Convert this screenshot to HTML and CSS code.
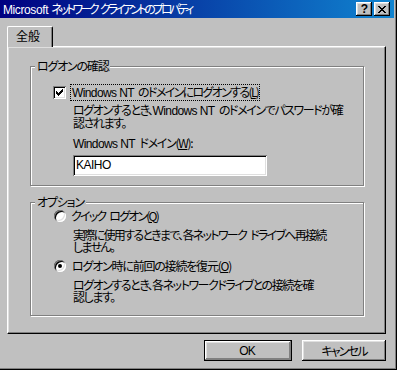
FILE: index.html
```html
<!DOCTYPE html>
<html lang="ja">
<head>
<meta charset="utf-8">
<link rel="stylesheet" href="styles.css">
</head>
<body>
<div class="window">
  <div class="titlebar">
    <span class="title"><span class="en">Microsoft</span> ネットワーク クライアントのプロパティ</span>
    <div class="tbtns">
      <span class="tbtn help">?</span>
      <span class="tbtn close"><svg width="8" height="7" viewBox="0 0 8 7" shape-rendering="crispEdges"><path d="M0 0h2v1H0z M6 0h2v1H6z M1 1h2v1H1z M5 1h2v1H5z M2 2h4v1H2z M3 3h2v1H3z M2 4h4v1H2z M1 5h2v1H1z M5 5h2v1H5z M0 6h2v1H0z M6 6h2v1H6z"/></svg></span>
    </div>
  </div>
  <div class="tabs"><div class="tab">全般</div></div>
  <div class="panel">
    <div class="group g1">
      <div class="legend">ログオンの確認</div>
      <div class="row check-row">
        <span class="checkbox"><svg width="7" height="7" viewBox="0 0 7 7" shape-rendering="crispEdges"><path d="M6 0h1v1H6z M5 1h2v1H5z M0 2h1v1H0z M4 2h3v1H4z M0 3h2v1H0z M3 3h3v1H3z M0 4h5v1H0z M1 5h3v1H1z M2 6h1v1H2z"/></svg></span>
        <span class="label focus"><span class="en">Windows NT</span> のドメインにログオンする(<u>L</u>)</span>
      </div>
      <p class="desc d1">ログオンするとき、<span class="en">Windows NT</span> のドメインでパスワードが確<br>認されます。</p>
      <div class="field-label"><span class="en">Windows NT</span> ドメイン(<u>W</u>):</div>
      <div class="input">KAIHO</div>
    </div>
    <div class="group g2">
      <div class="legend">オプション</div>
      <div class="row radio-row r1">
        <span class="radio"></span>
        <span class="label">クイック ログオン(<u>Q</u>)</span>
      </div>
      <p class="desc d2">実際に使用するときまで、各ネットワーク ドライブへ再接続<br>しません。</p>
      <div class="row radio-row r2">
        <span class="radio checked"><span class="dot"></span></span>
        <span class="label">ログオン時に前回の接続を復元(<u>O</u>)</span>
      </div>
      <p class="desc d3">ログオンするとき、各ネットワークドライブとの接続を確<br>認します。</p>
    </div>
  </div>
  <div class="buttons">
    <div class="btn default"><span class="btn-inner ok">OK</span></div>
    <div class="btn cancel"><span class="btn-inner">キャンセル</span></div>
  </div>
</div>
</body>
</html>
```

FILE: styles.css
```css
html, body {
  margin: 0;
  padding: 0;
  background: #c0c0c0;
}
body {
  font-family: "Noto Sans CJK JP", "Noto Sans", sans-serif;
  font-size: 12px;
  line-height: 12px;
  color: #000;
  font-feature-settings: "palt";
  letter-spacing: -1.2px;
  word-spacing: 3px;
}
.en {
  font-family: "Liberation Sans", "Noto Sans", sans-serif;
  letter-spacing: -0.6px;
  word-spacing: 0;
  font-feature-settings: normal;
}
.window {
  width: 397px;
  height: 370px;
  box-sizing: border-box;
  background: #c0c0c0;
  border-right: 1px solid #000;
  border-bottom: 1px solid #000;
  box-shadow: inset -1px -1px 0 #808080;
  padding-right: 2px;
  overflow: hidden;
}
.titlebar {
  height: 18px;
  display: flex;
  align-items: center;
  padding-left: 3px;
  background: linear-gradient(to right, #000080, #1084d0);
  color: #fff;
}
.title {
  white-space: nowrap;
  line-height: 12px;
  letter-spacing: -3px;
  word-spacing: 3.5px;
}
.title .en {
  letter-spacing: -0.4px;
}
.tbtns {
  margin-left: auto;
  margin-right: 4px;
  display: flex;
  gap: 2px;
}
.tbtn {
  width: 16px;
  height: 14px;
  box-sizing: border-box;
  background: #c0c0c0;
  box-shadow: inset -1px -1px 0 #000, inset 1px 1px 0 #fff, inset -2px -2px 0 #808080, inset 2px 2px 0 #dfdfdf;
  display: flex;
  align-items: center;
  justify-content: center;
  color: #000;
  letter-spacing: 0;
}
.help {
  font-family: "Liberation Sans", sans-serif;
  font-weight: bold;
  font-size: 12px;
  line-height: 12px;
  padding-left: 1px;
}
.close svg {
  fill: #000;
  display: block;
}
.tabs {
  margin: 8px 0 0 7px;
  display: flex;
  position: relative;
  z-index: 1;
}
.tab {
  width: 46px;
  height: 21px;
  box-sizing: border-box;
  padding: 3px 0 0 8px;
  background: #c0c0c0;
  border-left: 1px solid #fff;
  border-top: 1px solid #fff;
  border-right: 1px solid #000;
  border-top-left-radius: 2px;
  border-top-right-radius: 2px;
  box-shadow: inset -1px 0 0 #808080;
  margin-bottom: -1px;
  letter-spacing: 0;
}
.panel {
  margin-left: 7px;
  width: 379px;
  height: 288px;
  box-sizing: border-box;
  border-top: 1px solid #fff;
  border-left: 1px solid #fff;
  border-right: 1px solid #000;
  border-bottom: 1px solid #000;
  box-shadow: inset -1px -1px 0 #808080, inset 1px 1px 0 #dfdfdf;
  padding: 19px 0 0 22px;
}
.group {
  position: relative;
  width: 334px;
  box-sizing: border-box;
  border: 1px solid #808080;
  box-shadow: 1px 1px 0 #fff, inset 1px 1px 0 #fff;
  padding-left: 22px;
}
.g1 {
  height: 120px;
  padding-top: 18px;
}
.g2 {
  height: 114px;
  margin-top: 16px;
  padding-top: 6px;
}
.legend {
  position: absolute;
  top: -7px;
  left: 4px;
  padding: 0 2px;
  background: #c0c0c0;
  line-height: 12px;
  white-space: nowrap;
}
.row {
  display: flex;
  align-items: center;
  white-space: nowrap;
}
.check-row {
  height: 15px;
}
.checkbox {
  width: 13px;
  height: 13px;
  box-sizing: border-box;
  background: #fff;
  box-shadow: inset 1px 1px 0 #808080, inset -1px -1px 0 #fff, inset 2px 2px 0 #000, inset -2px -2px 0 #dfdfdf;
  display: flex;
  padding: 3px 0 0 3px;
}
.checkbox svg {
  display: block;
  fill: #000;
}
.label {
  line-height: 12px;
}
.check-row .label {
  margin-left: 4px;
  padding: 1px 1px;
  outline: 1px dotted #000;
  outline-offset: -1px;
  border: 1px solid transparent;
  letter-spacing: -1.65px;
}
.desc {
  margin: 0 0 0 20px;
  white-space: nowrap;
  line-height: 12px;
}
.d1 {
  margin-top: 4px;
  letter-spacing: -1.4px;
}
.field-label {
  margin: 8px 0 0 20px;
  white-space: nowrap;
  letter-spacing: -1.3px;
}
.input {
  margin: 5px 0 0 20px;
  width: 194px;
  height: 21px;
  box-sizing: border-box;
  background: #fff;
  box-shadow: inset 1px 1px 0 #808080, inset -1px -1px 0 #fff, inset 2px 2px 0 #000, inset -2px -2px 0 #dfdfdf;
  padding: 4px 0 0 3px;
  font-family: "Liberation Sans", sans-serif;
  line-height: 12px;
  letter-spacing: -0.5px;
}
.radio-row {
  height: 14px;
  padding-left: 1px;
}
.radio {
  width: 12px;
  height: 12px;
  border-radius: 50%;
  background: #fff;
  box-shadow: inset 1px 1px 0 #808080, inset -1px -1px 0 #fff, inset 2px 2px 0 #000, inset -2px -2px 0 #dfdfdf;
  display: flex;
  align-items: center;
  justify-content: center;
}
.dot {
  width: 4px;
  height: 4px;
  border-radius: 50%;
  background: #000;
}
.radio-row .label {
  margin-left: 5px;
}
.r1 .label {
  letter-spacing: -1.8px;
}
.r2 .label {
  margin-left: 6px;
  letter-spacing: -1.2px;
}
.d2 {
  margin-top: 6px;
  letter-spacing: -1.7px;
}
.r2 {
  margin-top: 6px;
}
.d3 {
  margin-top: 6px;
  letter-spacing: -1.45px;
}
.buttons {
  display: flex;
  justify-content: flex-end;
  gap: 10px;
  margin: 6px 8px 0 0;
}
.btn {
  height: 21px;
  box-sizing: border-box;
  display: flex;
}
.btn-inner {
  flex: 1;
  display: flex;
  align-items: center;
  justify-content: center;
  background: #c0c0c0;
  box-shadow: inset -1px -1px 0 #000, inset 1px 1px 0 #fff, inset -2px -2px 0 #808080, inset 2px 2px 0 #dfdfdf;
  line-height: 12px;
  letter-spacing: -1.8px;
}
.default {
  width: 88px;
  border: 1px solid #000;
}
.default .btn-inner {
  box-shadow: inset -1px -1px 0 #808080, inset 1px 1px 0 #fff, inset -2px -2px 0 #808080, inset 2px 2px 0 #dfdfdf;
}
.ok {
  font-family: "Liberation Sans", sans-serif;
  letter-spacing: -0.8px;
  padding-right: 2px;
}
.cancel {
  width: 84px;
}
```
